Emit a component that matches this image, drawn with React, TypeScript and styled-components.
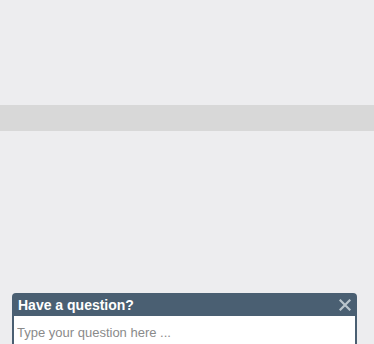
import React from "react";
import styled, { createGlobalStyle } from "styled-components";

const GlobalStyle = createGlobalStyle`
  html, body {
    margin: 0;
    padding: 0;
    background: #ededef;
    font-family: "Liberation Sans", Arial, sans-serif;
  }
`;

const Page = styled.div`
  width: 374px;
  height: 344px;
  overflow: hidden;
  display: flex;
  flex-direction: column;
`;

const Spacer = styled.div<{ $h: number }>`
  height: ${(p) => p.$h}px;
  flex-shrink: 0;
`;

const Band = styled.div`
  height: 26px;
  background: #d8d8d8;
  flex-shrink: 0;
`;

const Widget = styled.div`
  margin-left: 12px;
  width: 345px;
  display: flex;
  flex-direction: column;
`;

const Header = styled.div`
  height: 23px;
  background: #4a5f72;
  border-radius: 4px 4px 0 0;
  display: flex;
  align-items: center;
  justify-content: space-between;
  padding: 0 5px 0 6px;
  box-sizing: border-box;
`;

const Title = styled.span`
  color: #ffffff;
  font-size: 14px;
  font-weight: bold;
  line-height: 1;
  padding-top: 1px;
`;

const Close = styled.button`
  border: 0;
  background: none;
  padding: 0;
  width: 14px;
  height: 14px;
  display: flex;
  align-items: center;
  justify-content: center;
  cursor: pointer;
`;

const InputBox = styled.div`
  border: 2px solid #4a5f72;
  border-top: 0;
  border-bottom: 0;
  background: #ffffff;
  height: 40px;
  padding: 7px 0 0 3px;
  box-sizing: border-box;
`;

const Input = styled.input`
  border: 0;
  outline: none;
  width: 100%;
  padding: 0;
  font-family: "Liberation Sans", Arial, sans-serif;
  font-size: 13px;
  color: #333;
  background: transparent;

  &::placeholder {
    color: #8a8a8a;
  }
`;

export default function App() {
  return (
    <>
      <GlobalStyle />
      <Page>
        <Spacer $h={105} />
        <Band />
        <Spacer $h={162} />
        <Widget>
          <Header>
            <Title>Have a question?</Title>
            <Close aria-label="Close">
              <svg width="12" height="12" viewBox="0 0 12 12">
                <path
                  d="M1.5 1.5 L10.5 10.5 M10.5 1.5 L1.5 10.5"
                  stroke="#b9c5cd"
                  strokeWidth="2.2"
                  strokeLinecap="square"
                />
              </svg>
            </Close>
          </Header>
          <InputBox>
            <Input placeholder="Type your question here ..." />
          </InputBox>
        </Widget>
      </Page>
    </>
  );
}
